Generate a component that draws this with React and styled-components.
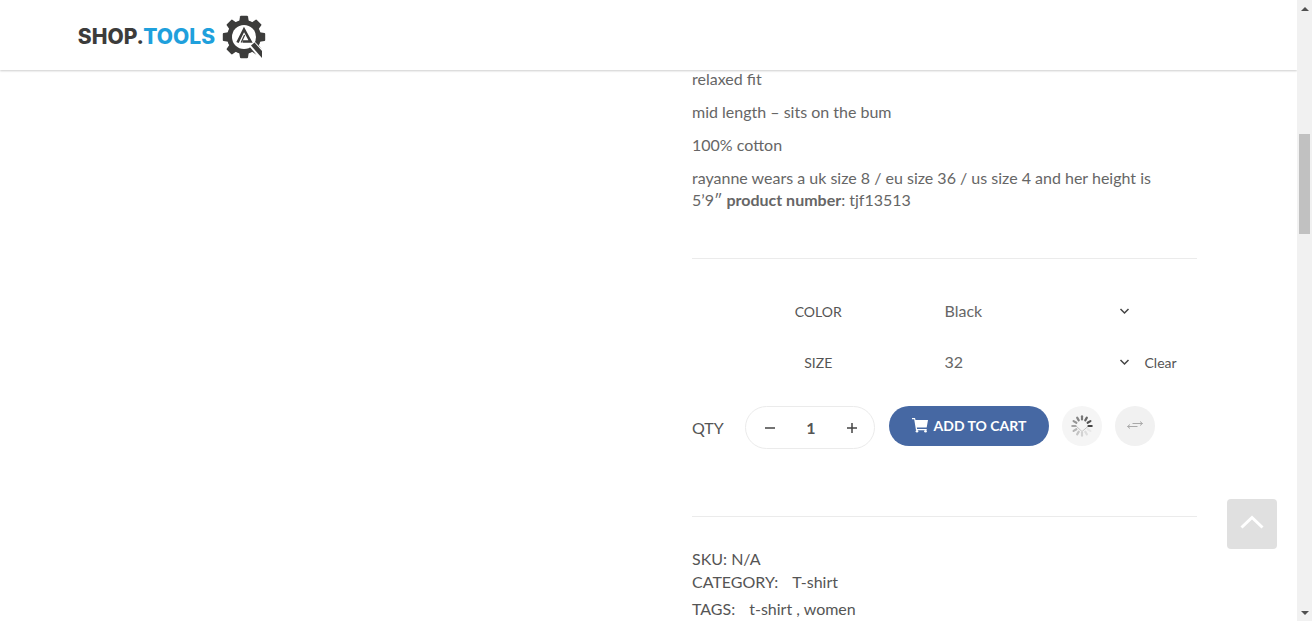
import React, { useState } from "react";
import styled, { createGlobalStyle, css } from "styled-components";

const GlobalStyle = createGlobalStyle`
  *, *::before, *::after { box-sizing: border-box; }
  body {
    margin: 0;
    overflow: hidden;
    background: #fff;
    color: #666;
    font-family: Lato, "Liberation Sans", sans-serif;
    font-size: 16px;
    line-height: 22px;
  }
  button, input, select { font: inherit; color: inherit; }
  a { color: inherit; text-decoration: none; }
`;

const Shell = styled.div`
  display: grid;
  grid-template-columns: minmax(0, 1fr) 15px;
  height: 100vh;
`;

const Page = styled.div`
  display: flex;
  flex-direction: column;
  min-width: 0;
  overflow: hidden;
`;

const Header = styled.header`
  flex: none;
  display: flex;
  height: 70px;
  padding: 0 6%;
  align-items: center;
  background: #fff;
  box-shadow: 0 1px 2px rgba(0, 0, 0, 0.2);
  z-index: 2;
`;

const Logo = styled.a`
  display: flex;
  align-items: center;
  gap: 7px;
  color: #3c3c3b;
  font-family: Inter, sans-serif;
  font-size: 21px;
  font-weight: 800;
  padding-top: 3px;
`;

const LogoAccent = styled.span`
  color: #1fa0dc;
`;

const Product = styled.main`
  display: grid;
  grid-template-columns: 614px minmax(0, 505px);
  justify-content: center;
  margin: -2px 22px 0 0;
`;

const Gallery = styled.div``;

const Summary = styled.section`
  min-width: 0;
`;

const Description = styled.div`
  padding-bottom: 47px;
  border-bottom: 1px solid #ebebeb;

  p { margin: 0 0 11px; max-width: 460px; }
  p:last-child { margin-bottom: 0; }
`;

const Variations = styled.table`
  width: 100%;
  margin-top: 27px;
  border-collapse: collapse;
  table-layout: fixed;

  th, td { height: 51px; padding: 0; vertical-align: middle; }
  th {
    color: #555;
    font-size: 14px;
    font-weight: 400;
    text-align: center;
    text-transform: uppercase;
  }
`;

const Choice = styled.div`
  display: flex;
  align-items: center;
  gap: 10px;
`;

const SelectWrap = styled.span`
  display: grid;
  width: 190px;
  align-items: center;

  select, svg { grid-area: 1 / 1; }
  svg { justify-self: end; margin-right: 5px; pointer-events: none; }
`;

const Select = styled.select`
  width: 100%;
  height: 40px;
  padding: 0 0 2px;
  border: 0;
  background: transparent;
  appearance: none;
`;

const Clear = styled.a`
  color: #555;
  font-size: 14px;
`;

const CartRow = styled.form`
  display: flex;
  align-items: flex-start;
  margin-top: 18px;
  padding-bottom: 66px;
  border-bottom: 1px solid #ebebeb;
`;

const QtyLabel = styled.label`
  width: 53px;
  color: #555;
  line-height: 44px;
`;

const Stepper = styled.div`
  display: flex;
  width: 130px;
  height: 43px;
  margin-right: 14px;
  padding: 0 6px 0 8px;
  align-items: center;
  border: 1px solid #ebebeb;
  border-radius: 22px;
`;

const StepButton = styled.button`
  display: flex;
  width: 32px;
  height: 40px;
  padding: 0;
  align-items: center;
  justify-content: center;
  border: 0;
  background: transparent;
  color: #444;
`;

const QtyInput = styled.input`
  flex: 1;
  min-width: 0;
  padding: 0;
  border: 0;
  background: transparent;
  color: #555;
  font-weight: 700;
  text-align: center;
`;

const AddButton = styled.button`
  display: flex;
  width: 160px;
  height: 40px;
  margin-right: 13px;
  padding: 0;
  align-items: center;
  justify-content: center;
  gap: 6px;
  border: 0;
  border-radius: 20px;
  background: #4668a3;
  color: #fff;
  font-size: 14px;
  font-weight: 700;
  white-space: nowrap;
`;

const RoundButton = styled.button`
  display: flex;
  width: 40px;
  height: 40px;
  margin-right: 13px;
  padding: 0;
  align-items: center;
  justify-content: center;
  border: 0;
  border-radius: 50%;
  background: ${(p) => (p.$busy ? "#f5f5f5" : "#f1f1f1")};
`;

const Meta = styled.div`
  display: flex;
  flex-direction: column;
  padding-top: 30px;
  color: #555;
`;

const MetaLine = styled.div`
  display: flex;
  min-height: 23px;
  align-items: center;
  gap: 14px;
  margin-bottom: ${(p) => (p.$spaced ? "4px" : "0")};
`;

const ToTop = styled.button`
  position: fixed;
  right: 35px;
  bottom: 72px;
  display: flex;
  width: 50px;
  height: 50px;
  padding: 0 0 4px;
  align-items: center;
  justify-content: center;
  border: 0;
  border-radius: 4px;
  background: #e0e0e0;
`;

const ScrollTrack = styled.div`
  display: grid;
  grid-template-rows: 17px 1fr 17px;
  justify-items: center;
  align-items: center;
  background: #f1f1f1;
`;

const ScrollRange = styled.div`
  display: grid;
  width: 11px;
  height: 100%;
  grid-template-rows: 117fr 100fr 370fr;
`;

const ScrollThumb = styled.div`
  grid-row: 2;
  background: #c1c1c1;
`;

const arrowSide = css`border-left: 4px solid transparent; border-right: 4px solid transparent;`;

const ScrollArrow = styled.span`
  ${arrowSide}
  ${(p) => (p.$down ? "border-top" : "border-bottom")}: 4px solid #505050;
`;

const TEETH = [0, 45, 90, 135, 180, 225, 270, 315];
const SPOKES = [
  "#777", "#666", "#555", "#444", "#e8e8e8", "#ddd",
  "#d2d2d2", "#c4c4c4", "#b5b5b5", "#a5a5a5", "#959595", "#868686",
];

function GearMark() {
  return (
    <svg width="44" height="44" viewBox="0 0 44 44" aria-hidden="true">
      <g fill="#3c3c3b">
        {TEETH.map((a) => (
          <path key={a} d="M17 8L18 1.5Q18.200 .8 19 .8H25Q25.800 .8 26 1.500L27 8Z" transform={`rotate(${a} 22 22)`} />
        ))}
        <circle cx="22" cy="22" r="17" />
      </g>
      <circle cx="22" cy="22" r="12" fill="#fff" />
      <path d="M27 31L32 26L44 38V44H38Z" fill="#fff" />
      <path d="M29 30.500L32.500 27.500L40 36V43Z" fill="#3c3c3b" />
      <path d="M15.500 27.500L22 14.500L28.500 26.500H20.500" fill="none" stroke="#3c3c3b" strokeWidth="2.600" />
      <path d="M19.200 27.500L22.600 20" fill="none" stroke="#3c3c3b" strokeWidth="1.200" />
    </svg>
  );
}

function Chevron() {
  return (
    <svg width="11" height="12" viewBox="0 0 11 12" aria-hidden="true">
      <path d="M1.500 3L5.500 7L9.500 3" fill="none" stroke="#444" strokeWidth="1.500" />
    </svg>
  );
}

function CartIcon() {
  return (
    <svg width="16" height="16" viewBox="0 0 16 16" fill="#fff" aria-hidden="true">
      <path d="M0 0H3L3.500 2H16L14.700 9.500H4.800L5.100 11H14.700V12.200H4L2.200 1.300H0Z" />
      <circle cx="5" cy="13.200" r="1.300" />
      <circle cx="13.500" cy="13.200" r="1.300" />
    </svg>
  );
}

function Spinner() {
  return (
    <svg width="24" height="24" viewBox="0 0 24 24" aria-hidden="true">
      <path d="M6 12L12 17.500L18.500 12" fill="none" stroke="#c4c4c4" />
      {SPOKES.map((c, i) => (
        <path key={c} d="M12 2.300V5.500" stroke={c} strokeWidth="2.200" strokeLinecap="round" transform={`rotate(${i * 30} 12 12)`} />
      ))}
    </svg>
  );
}

function CompareIcon() {
  return (
    <svg width="16" height="12" viewBox="0 0 16 12" fill="none" stroke="#aaa" aria-hidden="true">
      <path d="M5.500 3.500H15.500M13 1.500L15.500 3.500L13 5.500M10.500 6.500H.5M3 4.500L.5 6.500L3 8.500" />
    </svg>
  );
}

function StepIcon({ plus }) {
  return (
    <svg width="12" height="12" viewBox="0 0 12 12" stroke="#444" strokeWidth="1.500" aria-hidden="true">
      <path d={plus ? "M1 6H11M6 1V11" : "M1 6H11"} />
    </svg>
  );
}

function Option({ id, label, options, clear }) {
  return (
    <tr>
      <th scope="row"><label htmlFor={id}>{label}</label></th>
      <td>
        <Choice>
          <SelectWrap>
            <Select id={id}>{options.map((o) => <option key={o}>{o}</option>)}</Select>
            <Chevron />
          </SelectWrap>
          {clear && <Clear href="#clear">Clear</Clear>}
        </Choice>
      </td>
    </tr>
  );
}

export default function App() {
  const [qty, setQty] = useState(1);
  return (
    <>
      <GlobalStyle />
      <Shell>
        <Page>
          <Header>
            <Logo href="#home">
              <span>SHOP.<LogoAccent>TOOLS</LogoAccent></span>
              <GearMark />
            </Logo>
          </Header>
          <Product>
            <Gallery />
            <Summary>
              <Description>
                <p>relaxed fit</p>
                <p>mid length – sits on the bum</p>
                <p>100% cotton</p>
                <p>
                  rayanne wears a uk size 8 / eu size 36 / us size 4 and her height is 5’9″{" "}
                  <strong>product number</strong>: tjf13513
                </p>
              </Description>
              <Variations>
                <tbody>
                  <Option id="color" label="Color" options={["Black"]} />
                  <Option id="size" label="Size" options={["32"]} clear />
                </tbody>
              </Variations>
              <CartRow onSubmit={(e) => e.preventDefault()}>
                <QtyLabel htmlFor="qty">QTY</QtyLabel>
                <Stepper>
                  <StepButton type="button" aria-label="Decrease" onClick={() => setQty(Math.max(1, qty - 1))}>
                    <StepIcon />
                  </StepButton>
                  <QtyInput id="qty" value={qty} onChange={(e) => setQty(Number(e.target.value) || 1)} />
                  <StepButton type="button" aria-label="Increase" onClick={() => setQty(qty + 1)}>
                    <StepIcon plus />
                  </StepButton>
                </Stepper>
                <AddButton type="submit"><CartIcon />ADD TO CART</AddButton>
                <RoundButton type="button" $busy aria-label="Add to wishlist"><Spinner /></RoundButton>
                <RoundButton type="button" aria-label="Compare"><CompareIcon /></RoundButton>
              </CartRow>
              <Meta>
                <MetaLine>SKU: N/A</MetaLine>
                <MetaLine $spaced><span>CATEGORY:</span><a href="#t-shirt">T-shirt</a></MetaLine>
                <MetaLine>
                  <span>TAGS:</span>
                  <span><a href="#tag-t-shirt">t-shirt</a> , <a href="#tag-women">women</a></span>
                </MetaLine>
              </Meta>
            </Summary>
          </Product>
        </Page>
        <ScrollTrack aria-hidden="true">
          <ScrollArrow />
          <ScrollRange><ScrollThumb /></ScrollRange>
          <ScrollArrow $down />
        </ScrollTrack>
      </Shell>
      <ToTop type="button" aria-label="Back to top">
        <svg width="24" height="14" viewBox="0 0 24 14" aria-hidden="true">
          <path d="M1.500 12.500L12 2.500L22.500 12.500" fill="none" stroke="#fff" strokeWidth="3" />
        </svg>
      </ToTop>
    </>
  );
}
